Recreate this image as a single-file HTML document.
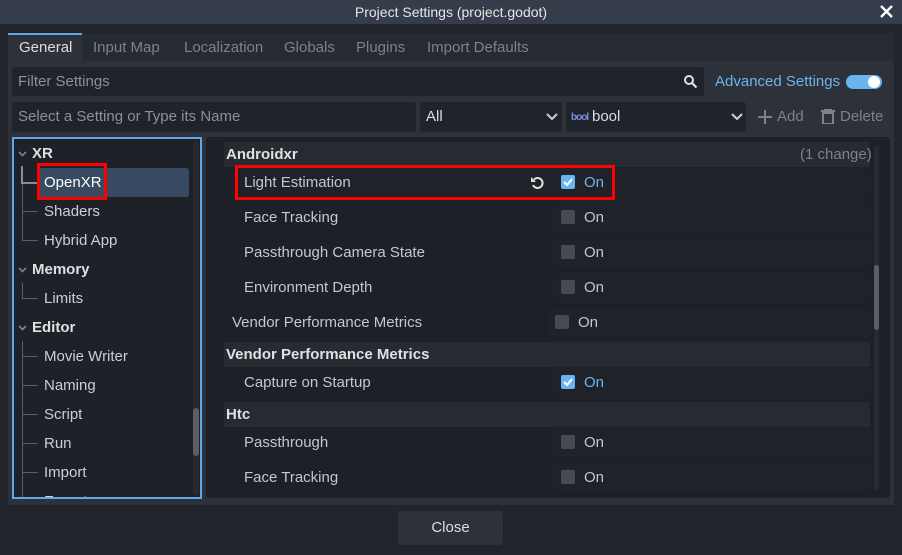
<!DOCTYPE html>
<html><head><meta charset="utf-8"><style>
*{margin:0;padding:0;box-sizing:border-box}
body{width:902px;height:555px;background:#21252b;font-family:"Liberation Sans","DejaVu Sans",sans-serif;font-size:15px;color:#cdcfd2;position:relative;overflow:hidden}
.a{position:absolute}
.t{position:absolute;white-space:nowrap;line-height:20px}
.lab{color:#c5c7ca}
.val{position:absolute;background:#1f2228;border-radius:3px;height:31px}
.cb{position:absolute;width:14px;height:14px;background:#464a53;border-radius:2px}
.cbon{background:#6ab4f0}
.hd{position:absolute;left:224px;width:646px;height:25px;background:#262b32}
.tr{color:#cdcfd2}
.ln{position:absolute;background:#5c6068}
.b{font-weight:bold;color:#dfe0e2}
</style></head><body>
<div class="a" style="left:0;top:0;width:902px;height:24px;background:#363d4a"></div>
<div class="t" style="left:0;top:2px;width:902px;text-align:center;color:#e6e7e9;font-size:14px">Project Settings (project.godot)</div>
<svg class="a" style="left:880px;top:5px" width="13" height="13" viewBox="0 0 13 13"><path d="M1 1l11 11M12 1L1 12" stroke="#fff" stroke-width="2.4"/></svg>
<div class="a" style="left:8px;top:33px;width:886px;height:28px;background:#262a32"></div>
<div class="a" style="left:8px;top:33px;width:74px;height:28px;background:#2c313a;border-top:2px solid #5fa8e8"></div>
<div class="t" style="left:19px;top:38px;color:#dcdde0">General</div>
<div class="t" style="left:93px;top:38px;color:#7d8189">Input Map</div>
<div class="t" style="left:184px;top:38px;color:#7d8189">Localization</div>
<div class="t" style="left:284px;top:38px;color:#7d8189">Globals</div>
<div class="t" style="left:356px;top:38px;color:#7d8189">Plugins</div>
<div class="t" style="left:427px;top:38px;color:#7d8189">Import Defaults</div>
<div class="a" style="left:8px;top:61px;width:886px;height:444px;background:#2c313a"></div>
<div class="a" style="left:12px;top:67px;width:692px;height:29px;background:#1f232a;border-radius:3px"></div>
<div class="t" style="left:18px;top:72px;color:#8d9096">Filter Settings</div>
<svg class="a" style="left:683px;top:74px" width="15" height="15" viewBox="0 0 15 15"><circle cx="6" cy="6" r="4" fill="none" stroke="#e0e0e0" stroke-width="2"/><path d="M9 9l4.5 4.5" stroke="#e0e0e0" stroke-width="2.2"/></svg>
<div class="t" style="left:715px;top:72px;color:#6cb4ee">Advanced Settings</div>
<div class="a" style="left:846px;top:75px;width:36px;height:14px;background:#6ab4f0;border-radius:7px"></div>
<div class="a" style="left:868px;top:76px;width:12px;height:12px;background:#fff;border-radius:6px"></div>
<div class="a" style="left:12px;top:102px;width:404px;height:30px;background:#1f232a;border-radius:3px"></div>
<div class="t" style="left:18px;top:107px;color:#8d9096">Select a Setting or Type its Name</div>
<div class="a" style="left:420px;top:102px;width:142px;height:30px;background:#1f232a;border-radius:3px"></div>
<div class="t" style="left:426px;top:107px;color:#dcdde0">All</div>
<svg class="a" style="left:546px;top:113px" width="12" height="8" viewBox="0 0 12 8"><path d="M1 1l5 5 5-5" fill="none" stroke="#cdcfd2" stroke-width="2"/></svg>
<div class="a" style="left:566px;top:102px;width:180px;height:30px;background:#1f232a;border-radius:3px"></div>
<div class="t" style="left:571px;top:108px;color:#7a8ee8;font-size:10px;font-weight:bold;letter-spacing:-1px">bool</div>
<div class="t" style="left:592px;top:107px;color:#dcdde0">bool</div>
<svg class="a" style="left:731px;top:113px" width="12" height="8" viewBox="0 0 12 8"><path d="M1 1l5 5 5-5" fill="none" stroke="#cdcfd2" stroke-width="2"/></svg>
<svg class="a" style="left:758px;top:110px" width="14" height="14" viewBox="0 0 14 14"><path d="M7 0v14M0 7h14" stroke="#7d8189" stroke-width="2"/></svg>
<div class="t" style="left:777px;top:107px;color:#7d8189">Add</div>
<svg class="a" style="left:821px;top:109px" width="14" height="15" viewBox="0 0 14 15"><path d="M0 2h14M4 2V0h6v2M2 4h10v11H2z" fill="none" stroke="#7d8189" stroke-width="2"/></svg>
<div class="t" style="left:840px;top:107px;color:#7d8189">Delete</div>
<div class="a" style="left:12px;top:137px;width:190px;height:362px;background:#1e2128;border:2px solid #5fa8e8"></div>
<div class="a" style="left:193px;top:142px;width:6px;height:353px;background:#262a31;border-radius:3px"></div>
<div class="a" style="left:193px;top:408px;width:6px;height:48px;background:#5a5e66;border-radius:3px"></div>
<div class="a" style="left:38px;top:168px;width:151px;height:29px;background:#374a62;border-radius:3px"></div>
<svg class="a" style="left:18px;top:151px" width="9" height="6" viewBox="0 0 9 6"><path d="M1 1l3.5 3.5L8 1" fill="none" stroke="#80848b" stroke-width="1.6"/></svg>
<div class="t b" style="left:32px;top:144px">XR</div>
<div class="ln" style="left:21px;top:166px;width:2px;height:17px;background:#8a8d93"></div>
<div class="ln" style="left:21px;top:182px;width:17px;height:2px;background:#8a8d93"></div>
<div class="ln" style="left:22px;top:184px;width:1px;height:56px"></div>
<div class="ln" style="left:22px;top:211px;width:16px;height:1px"></div>
<div class="ln" style="left:22px;top:240px;width:16px;height:1px"></div>
<div class="t" style="left:44px;top:173px;color:#fff">OpenXR</div>
<div class="t tr" style="left:44px;top:202px">Shaders</div>
<div class="t tr" style="left:44px;top:231px">Hybrid App</div>
<svg class="a" style="left:18px;top:267px" width="9" height="6" viewBox="0 0 9 6"><path d="M1 1l3.5 3.5L8 1" fill="none" stroke="#80848b" stroke-width="1.6"/></svg>
<div class="t b" style="left:32px;top:260px">Memory</div>
<div class="ln" style="left:22px;top:283px;width:1px;height:15px"></div>
<div class="ln" style="left:22px;top:298px;width:16px;height:1px"></div>
<div class="t tr" style="left:44px;top:289px">Limits</div>
<svg class="a" style="left:18px;top:325px" width="9" height="6" viewBox="0 0 9 6"><path d="M1 1l3.5 3.5L8 1" fill="none" stroke="#80848b" stroke-width="1.6"/></svg>
<div class="t b" style="left:32px;top:318px">Editor</div>
<div class="ln" style="left:22px;top:341px;width:1px;height:156px"></div>
<div class="ln" style="left:22px;top:356px;width:16px;height:1px"></div>
<div class="ln" style="left:22px;top:385px;width:16px;height:1px"></div>
<div class="ln" style="left:22px;top:414px;width:16px;height:1px"></div>
<div class="ln" style="left:22px;top:443px;width:16px;height:1px"></div>
<div class="ln" style="left:22px;top:472px;width:16px;height:1px"></div>
<div class="t tr" style="left:44px;top:347px">Movie Writer</div>
<div class="t tr" style="left:44px;top:376px">Naming</div>
<div class="t tr" style="left:44px;top:405px">Script</div>
<div class="t tr" style="left:44px;top:434px">Run</div>
<div class="t tr" style="left:44px;top:463px">Import</div>
<div class="t tr" style="left:44px;top:492px;height:5px;overflow:hidden">Export</div>
<div class="a" style="left:14px;top:497px;width:186px;height:1px;background:#5fa8e8"></div>
<div class="a" style="left:206px;top:137px;width:684px;height:361px;background:#1d2026;border-radius:3px"></div>
<div class="a" style="left:874px;top:146px;width:5px;height:344px;background:#262a31;border-radius:3px"></div>
<div class="a" style="left:874px;top:265px;width:5px;height:65px;background:#5a5e66;border-radius:3px"></div>
<div class="hd" style="top:142px"></div>
<div class="t b" style="left:226px;top:145px">Androidxr</div>
<div class="t" style="left:800px;top:145px;color:#7d8189">(1 change)</div>
<div class="a" style="left:240px;top:168px;width:630px;height:30px;background:#1f2228;border-radius:3px"></div>
<div class="val" style="left:554px;top:168px;width:316px"></div>
<div class="t lab" style="left:244px;top:173px">Light Estimation</div>
<svg class="a" style="left:530px;top:175px" width="15" height="15" viewBox="0 0 15 15"><path d="M4 4.5A5 5 0 1 1 3 10" fill="none" stroke="#e0e0e0" stroke-width="2"/><path d="M1 2v5h5z" fill="#e0e0e0"/></svg>
<div class="cb cbon" style="left:561px;top:175px"></div><svg class="a" style="left:563px;top:177px" width="10" height="10" viewBox="0 0 10 10"><path d="M1 5l3 3 5-6" fill="none" stroke="#fff" stroke-width="2"/></svg>
<div class="t" style="left:584px;top:173px;color:#6cb4ee">On</div>
<div class="a" style="left:235px;top:165px;width:380px;height:35px;border:3px solid #f00"></div>
<div class="a" style="left:37px;top:163px;width:70px;height:37px;border:3px solid #f00"></div>
<div class="val" style="left:554px;top:202px;width:316px"></div>
<div class="t lab" style="left:244px;top:208px">Face Tracking</div>
<div class="cb" style="left:561px;top:210px"></div><div class="t lab" style="left:584px;top:208px">On</div>
<div class="val" style="left:554px;top:237px;width:316px"></div>
<div class="t lab" style="left:244px;top:243px">Passthrough Camera State</div>
<div class="cb" style="left:561px;top:245px"></div><div class="t lab" style="left:584px;top:243px">On</div>
<div class="val" style="left:554px;top:272px;width:316px"></div>
<div class="t lab" style="left:244px;top:278px">Environment Depth</div>
<div class="cb" style="left:561px;top:280px"></div><div class="t lab" style="left:584px;top:278px">On</div>
<div class="val" style="left:548px;top:307px;width:322px"></div>
<div class="t lab" style="left:232px;top:313px">Vendor Performance Metrics</div>
<div class="cb" style="left:555px;top:315px"></div><div class="t lab" style="left:578px;top:313px">On</div>
<div class="hd" style="top:342px"></div>
<div class="t b" style="left:226px;top:345px">Vendor Performance Metrics</div>
<div class="val" style="left:554px;top:367px;width:316px"></div>
<div class="t lab" style="left:244px;top:373px">Capture on Startup</div>
<div class="cb cbon" style="left:561px;top:375px"></div><svg class="a" style="left:563px;top:377px" width="10" height="10" viewBox="0 0 10 10"><path d="M1 5l3 3 5-6" fill="none" stroke="#fff" stroke-width="2"/></svg>
<div class="t" style="left:584px;top:373px;color:#6cb4ee">On</div>
<div class="hd" style="top:402px"></div>
<div class="t b" style="left:226px;top:405px">Htc</div>
<div class="val" style="left:554px;top:427px;width:316px"></div>
<div class="t lab" style="left:244px;top:433px">Passthrough</div>
<div class="cb" style="left:561px;top:435px"></div><div class="t lab" style="left:584px;top:433px">On</div>
<div class="val" style="left:554px;top:462px;width:316px"></div>
<div class="t lab" style="left:244px;top:468px">Face Tracking</div>
<div class="cb" style="left:561px;top:470px"></div><div class="t lab" style="left:584px;top:468px">On</div>
<div class="a" style="left:398px;top:511px;width:105px;height:34px;background:#2c313a;border-radius:3px"></div>
<div class="t" style="left:398px;top:518px;width:105px;text-align:center;color:#dcdde0">Close</div>
</body></html>
